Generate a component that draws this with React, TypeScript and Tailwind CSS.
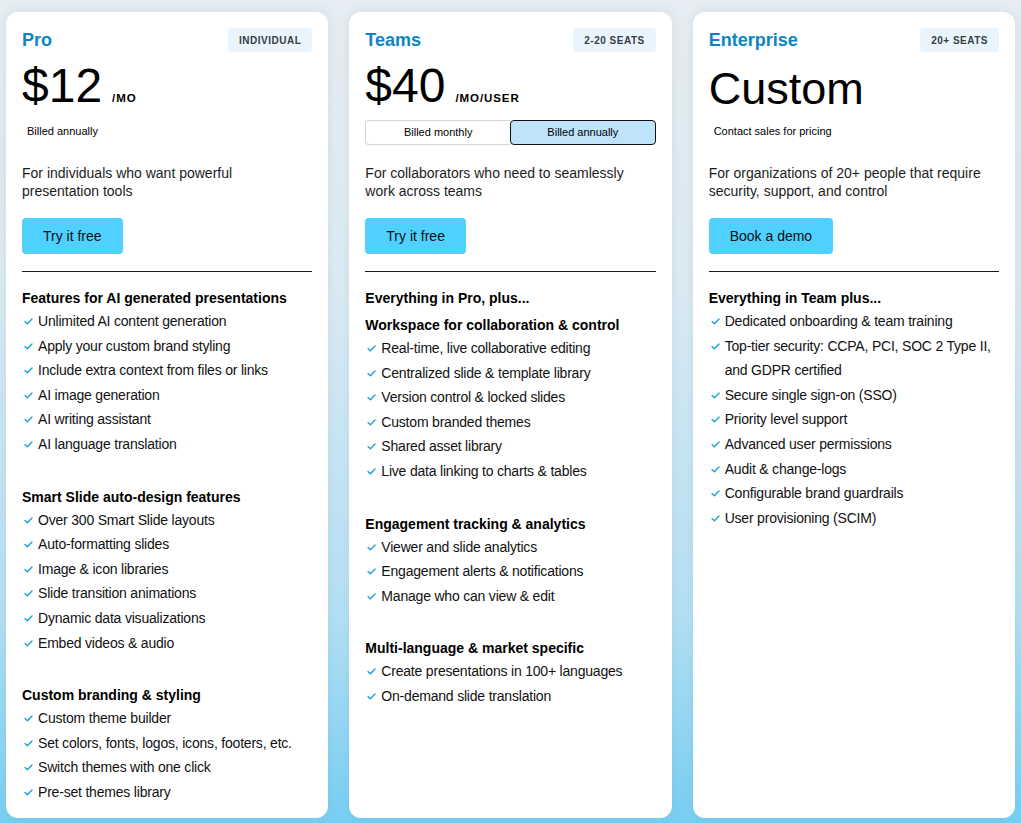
type Section = { heading: string; items: string[] };

type Plan = {
  name: string;
  badge: string;
  price: string;
  unit?: string;
  note?: string;
  toggle?: boolean;
  description: string;
  cta: string;
  intro?: string;
  sections: Section[];
};

const plans: Plan[] = [
  {
    name: "Pro",
    badge: "INDIVIDUAL",
    price: "$12",
    unit: "/MO",
    note: "Billed annually",
    description: "For individuals who want powerful presentation tools",
    cta: "Try it free",
    sections: [
      {
        heading: "Features for AI generated presentations",
        items: [
          "Unlimited AI content generation",
          "Apply your custom brand styling",
          "Include extra context from files or links",
          "AI image generation",
          "AI writing assistant",
          "AI language translation",
        ],
      },
      {
        heading: "Smart Slide auto-design features",
        items: [
          "Over 300 Smart Slide layouts",
          "Auto-formatting slides",
          "Image & icon libraries",
          "Slide transition animations",
          "Dynamic data visualizations",
          "Embed videos & audio",
        ],
      },
      {
        heading: "Custom branding & styling",
        items: [
          "Custom theme builder",
          "Set colors, fonts, logos, icons, footers, etc.",
          "Switch themes with one click",
          "Pre-set themes library",
        ],
      },
    ],
  },
  {
    name: "Teams",
    badge: "2-20 SEATS",
    price: "$40",
    unit: "/MO/USER",
    toggle: true,
    description: "For collaborators who need to seamlessly work across teams",
    cta: "Try it free",
    intro: "Everything in Pro, plus...",
    sections: [
      {
        heading: "Workspace for collaboration & control",
        items: [
          "Real-time, live collaborative editing",
          "Centralized slide & template library",
          "Version control & locked slides",
          "Custom branded themes",
          "Shared asset library",
          "Live data linking to charts & tables",
        ],
      },
      {
        heading: "Engagement tracking & analytics",
        items: [
          "Viewer and slide analytics",
          "Engagement alerts & notifications",
          "Manage who can view & edit",
        ],
      },
      {
        heading: "Multi-language & market specific",
        items: [
          "Create presentations in 100+ languages",
          "On-demand slide translation",
        ],
      },
    ],
  },
  {
    name: "Enterprise",
    badge: "20+ SEATS",
    price: "Custom",
    note: "Contact sales for pricing",
    description:
      "For organizations of 20+ people that require security, support, and control",
    cta: "Book a demo",
    sections: [
      {
        heading: "Everything in Team plus...",
        items: [
          "Dedicated onboarding & team training",
          "Top-tier security: CCPA, PCI, SOC 2 Type II, and GDPR certified",
          "Secure single sign-on (SSO)",
          "Priority level support",
          "Advanced user permissions",
          "Audit & change-logs",
          "Configurable brand guardrails",
          "User provisioning (SCIM)",
        ],
      },
    ],
  },
];

function CheckMark() {
  return (
    <svg width="9" height="7" viewBox="0 0 9 7" fill="none" className="mt-[9px] shrink-0">
      <path d="M1 3.6 L3.4 5.8 L8 1" stroke="#1d9fd9" strokeWidth="1.4" strokeLinecap="round" strokeLinejoin="round" />
    </svg>
  );
}

function PlanCard({ plan }: { plan: Plan }) {
  const isCustom = !plan.unit;
  return (
    <div className="flex flex-col rounded-xl bg-white px-4 pt-4 shadow-[0_0_12px_rgba(120,150,175,0.18)]">
      {/* Header */}
      <div className="flex h-6 items-center justify-between">
        <h3 className="text-[18px] font-semibold text-[#0a86c5]">{plan.name}</h3>
        <span className="flex h-6 items-center rounded-[4px] bg-[#e9f4fd] px-[11px] text-[10px] font-bold tracking-[0.05em] text-[#383d44]">
          {plan.badge}
        </span>
      </div>

      {/* Price */}
      <div className="mt-[10px] flex h-12 items-baseline">
        <span className={isCustom ? "text-[45px] leading-[53px] text-black" : "text-[48px] leading-none text-black"}>
          {plan.price}
        </span>
        {plan.unit && (
          <span className="ml-[10px] text-[11.5px] font-bold tracking-[0.08em] text-black">{plan.unit}</span>
        )}
      </div>

      {/* Billing */}
      {plan.toggle ? (
        <div className="mt-[10px] flex h-[25px] text-[11px] text-black">
          <button className="flex-1 rounded-l-[4px] border border-r-0 border-[#d4d4d4] bg-white">Billed monthly</button>
          <button className="flex-1 rounded-[4px] border border-[#111] bg-[#bee3fb]">Billed annually</button>
        </div>
      ) : (
        <p className="mt-[10px] h-[25px] pl-[5px] text-[11px] leading-[22px] text-black">{plan.note}</p>
      )}

      <p className="mt-[19px] text-[14px] leading-[18px] text-[#1c1c1c]">{plan.description}</p>

      <div className="mt-[18px]">
        <button className="h-9 rounded-[4px] bg-[#4fd0ff] px-[21px] text-[14px] text-[#111]">{plan.cta}</button>
      </div>

      <div className="mt-[17px] h-px bg-[#1a1a1a]" />

      {/* Features */}
      <div className="mt-[15px]">
        {plan.intro && (
          <p className="mb-[5px] text-[14px] font-bold leading-[22px] text-black">{plan.intro}</p>
        )}
        {plan.sections.map((section, i) => (
          <div key={section.heading} className={i > 0 ? "mt-[29px]" : ""}>
            <p className="text-[14px] font-bold leading-[22px] text-black">{section.heading}</p>
            <ul>
              {section.items.map((item) => (
                <li key={item} className="flex gap-[5px] pl-[2px] text-[14px] leading-[24.6px] tracking-[-0.2px] text-[#111]">
                  <CheckMark />
                  <span>{item}</span>
                </li>
              ))}
            </ul>
          </div>
        ))}
      </div>
    </div>
  );
}

export default function App() {
  return (
    <div
      className="grid h-[823px] w-full grid-cols-3 gap-[21px] bg-[linear-gradient(180deg,#e7edf2_0%,#dcebf3_35%,#b4e0f4_75%,#76cff2_100%)] px-[6px] pt-[12px] pb-[5px]"
      style={{ fontFamily: '"Liberation Sans", Arial, sans-serif' }}
    >
      {plans.map((plan) => (
        <PlanCard key={plan.name} plan={plan} />
      ))}
    </div>
  );
}
